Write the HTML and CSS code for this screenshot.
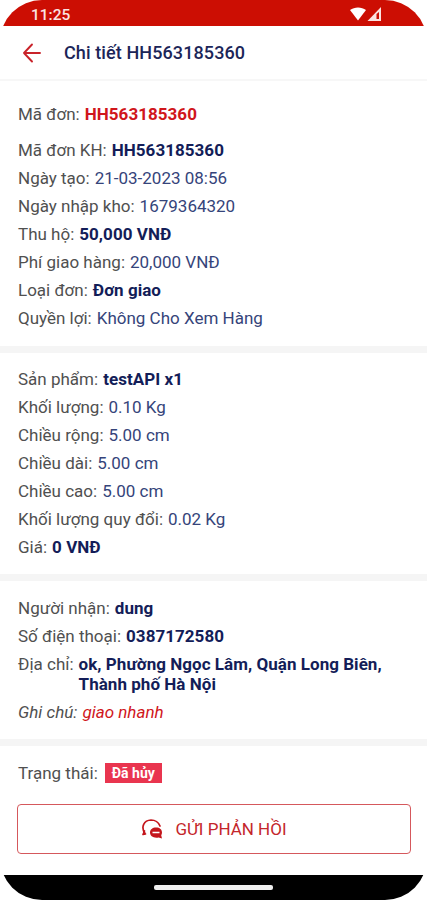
FILE: index.html
```html
<!DOCTYPE html>
<html lang="vi">

<head>
    <title>Chi tiết đơn hàng</title>
    <meta name="viewport" content="width=device-width, initial-scale=1" />
    <meta http-equiv="content-type" content="text/html; charset=utf-8" />
    <link rel="stylesheet" href="styles.css">
</head>

<body>
    <div class="phone">
        <div class="status">
            <span class="clock">11:25</span>
            <svg class="signal" width="34" height="16" viewBox="0 0 34 16">
                <path d="M1 4C5.500 .5 12.500 .5 17 4L9 14.500Z" fill="#fff" />
                <path d="M32 1V15H18.500Z" fill="#fbe3e1" />
                <path d="M27.500 8L30 6V13H27.500Z" fill="#cc0e03" />
            </svg>
        </div>

        <div class="hdr">
            <svg class="back" width="20" height="20" viewBox="0 0 20 20">
                <path d="M10 1.500L2 10L10 18.500M2 10H18" fill="none" stroke="#c9232a" stroke-width="1.900" stroke-linecap="round" stroke-linejoin="round" />
            </svg>
            <span class="title">Chi tiết HH563185360</span>
        </div>

        <div class="block order">
            <div class="row code"><span class="label">Mã đơn:</span><b class="red">HH563185360</b></div>
            <div class="row"><span class="label">Mã đơn KH:</span><b>HH563185360</b></div>
            <div class="row"><span class="label">Ngày tạo:</span><span>21-03-2023 08:56</span></div>
            <div class="row"><span class="label">Ngày nhập kho:</span><span>1679364320</span></div>
            <div class="row"><span class="label">Thu hộ:</span><b>50,000 VNĐ</b></div>
            <div class="row"><span class="label">Phí giao hàng:</span><span>20,000 VNĐ</span></div>
            <div class="row"><span class="label">Loại đơn:</span><b>Đơn giao</b></div>
            <div class="row"><span class="label">Quyền lợi:</span><span>Không Cho Xem Hàng</span></div>
        </div>

        <div class="block product">
            <div class="row"><span class="label">Sản phẩm:</span><b>testAPI x1</b></div>
            <div class="row"><span class="label">Khối lượng:</span><span>0.10 Kg</span></div>
            <div class="row"><span class="label">Chiều rộng:</span><span>5.00 cm</span></div>
            <div class="row"><span class="label">Chiều dài:</span><span>5.00 cm</span></div>
            <div class="row"><span class="label">Chiều cao:</span><span>5.00 cm</span></div>
            <div class="row"><span class="label">Khối lượng quy đổi:</span><span>0.02 Kg</span></div>
            <div class="row"><span class="label">Giá:</span><b>0 VNĐ</b></div>
        </div>

        <div class="block receiver">
            <div class="row"><span class="label">Người nhận:</span><b>dung</b></div>
            <div class="row"><span class="label">Số điện thoại:</span><b>0387172580</b></div>
            <div class="row"><span class="label">Địa chỉ:</span><b>ok, Phường Ngọc Lâm, Quận Long Biên,<br>Thành phố Hà Nội</b></div>
            <div class="row note"><span class="label">Ghi chú:</span><span class="red">giao nhanh</span></div>
        </div>

        <div class="block state">
            <div class="row"><span class="label">Trạng thái:</span><span class="badge">Đã hủy</span></div>
            <button class="btn">
                <svg width="22" height="22" viewBox="0 0 22 22">
                    <path d="M4 15.500C-.5 9 3 2.300 10 2C14.500 2 17.500 4.500 19 8M4.500 16L2 16.500L3.500 13" fill="none" stroke="#c4161c" stroke-width="1.700" stroke-linecap="round" stroke-linejoin="round" />
                    <path d="M15 9.500C18.800 9.500 21 11.500 21 14.500C21 15.700 20.700 16.500 20.200 17.300L21 20.500L17.600 19.500C12.500 20.500 9 18 9 14.500C9 11.500 11.500 9.500 15 9.500Z" fill="#c4161c" />
                    <path d="M11.500 14.500H18.500" stroke="#fff" stroke-width="1.300" />
                </svg>
                <span>GỬI PHẢN HỒI</span>
            </button>
        </div>

        <div class="navbar"><div class="handle"></div></div>
    </div>
</body>

</html>
```
FILE: styles.css
```css
* {
    box-sizing: border-box;
}

body {
    margin: 0;
    background: #fff;
    font-family: Roboto, "Noto Sans", sans-serif;
    font-size: 17px;
    line-height: 20px;
    color: #35447a;
}

.phone {
    display: flex;
    flex-direction: column;
    width: 427px;
    height: 900px;
    overflow: hidden;
    border-radius: 42px;
    background: #fff;
}

.status {
    display: flex;
    justify-content: space-between;
    height: 26px;
    padding: 6px 44px 0 31px;
    background: #cc0e03;
}

.clock {
    color: #fbe3e1;
    font-size: 15.5px;
    font-weight: 500;
    line-height: 18px;
}

.hdr {
    display: flex;
    align-items: center;
    height: 55px;
    padding-left: 22px;
    border-bottom: 2px solid #f7f7f7;
}

.title {
    margin-left: 22px;
    color: #1b2558;
    font-size: 18px;
    font-weight: 500;
    letter-spacing: 0.1px;
}

.block {
    padding: 12px 17px 0 18px;
    border-bottom: 7px solid #f5f5f5;
}

.order {
    height: 272px;
    padding-top: 19px;
}

.product {
    height: 228px;
}

.receiver {
    height: 165px;
    padding-top: 13px;
}

.state {
    flex: 1;
    padding-top: 13px;
    border-bottom: 0;
}

.row {
    display: flex;
    padding: 4px 0;
    white-space: nowrap;
}

.code {
    margin-bottom: 8px;
}

.label {
    margin-right: 5px;
    color: #505050;
}

b {
    color: #131d58;
    font-weight: 700;
    letter-spacing: 0.04px;
}

.red {
    color: #d0161b;
}

.note {
    font-style: italic;
}

.badge {
    height: 20px;
    margin-left: 2px;
    padding: 0 7px;
    background: #e9354f;
    color: #fff;
    font-size: 14px;
    font-weight: 700;
}

.btn {
    display: flex;
    align-items: center;
    justify-content: center;
    width: 394px;
    height: 50px;
    margin: 17px 0 0 -1px;
    padding: 0;
    border: 1.5px solid #d5585c;
    border-radius: 4px;
    background: #fff;
    color: #c4262b;
    font-family: inherit;
    font-size: 17px;
}

.btn span {
    margin-left: 12px;
}

.navbar {
    display: flex;
    justify-content: center;
    height: 25px;
    padding-top: 10px;
    background: #000;
}

.handle {
    width: 119px;
    height: 5px;
    border-radius: 2px;
    background: #eee;
}
```
